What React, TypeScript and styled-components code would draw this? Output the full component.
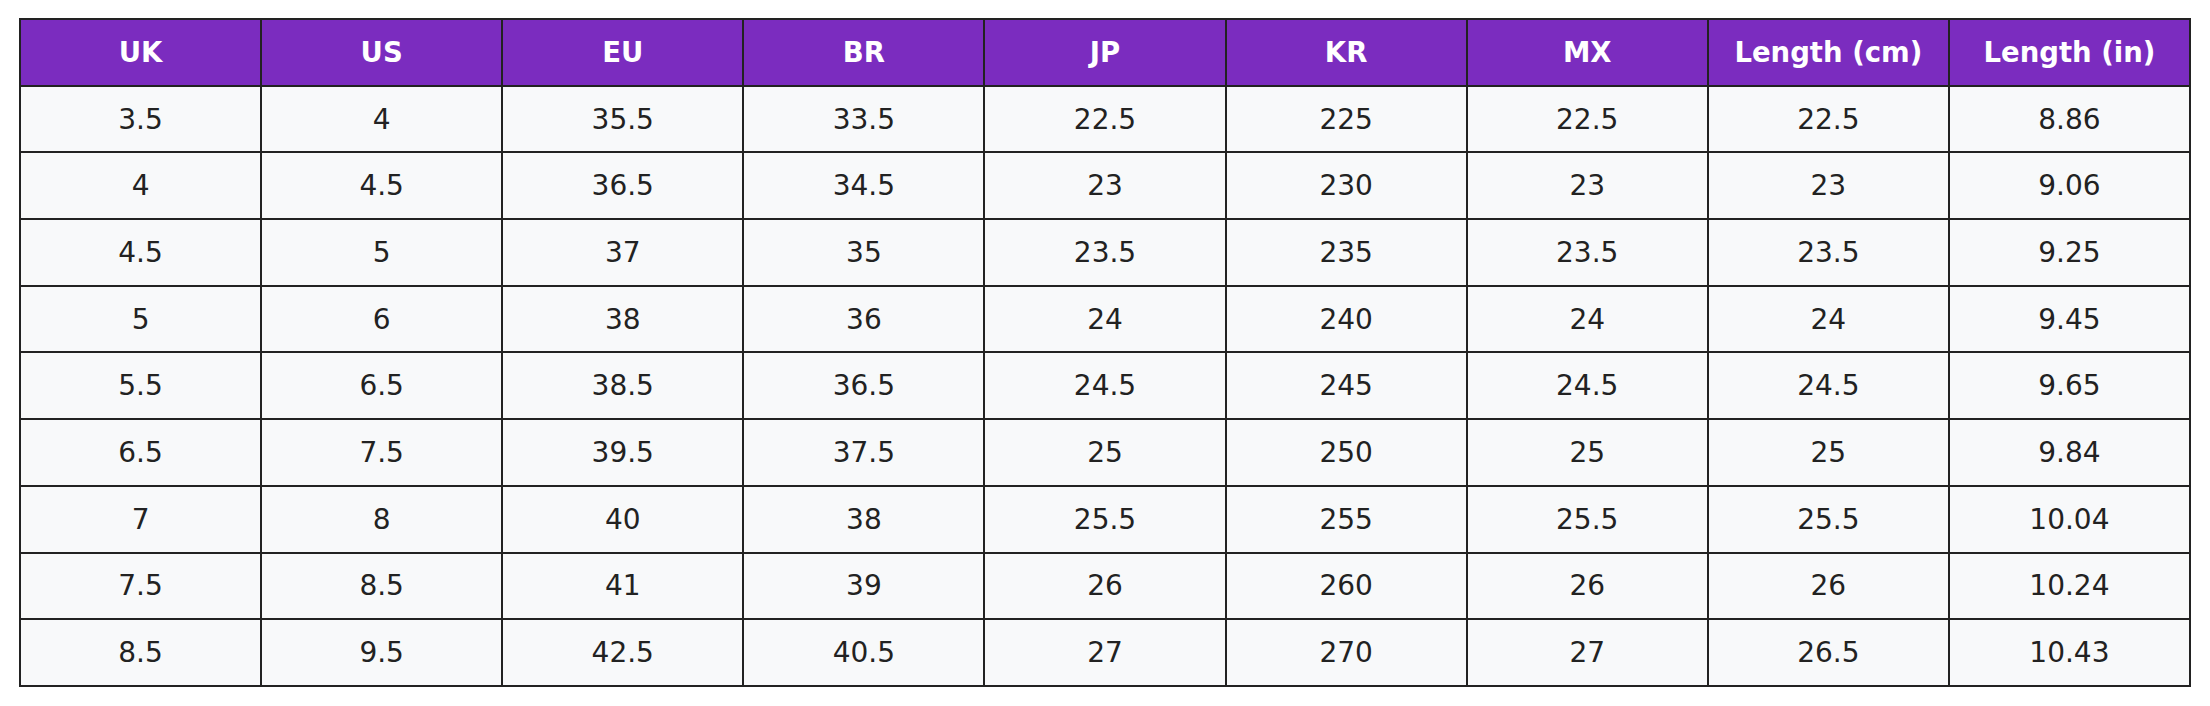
import React from "react";
import styled, { createGlobalStyle } from "styled-components";

const Global = createGlobalStyle`
  html, body { margin: 0; padding: 0; background: #ffffff; }
  body { font-family: "DejaVu Sans", "Liberation Sans", sans-serif; }
`;

const Page = styled.div`
  padding: 18px 19px;
`;

const Table = styled.table`
  width: 2172px;
  table-layout: fixed;
  border-collapse: separate;
  border-spacing: 0;
  border-left: 2px solid #222222;
  border-top: 2px solid #222222;
`;

const Th = styled.th`
  box-sizing: border-box;
  height: 66.7px;
  padding: 0;
  background: #7b2cbf;
  color: #ffffff;
  font-size: 27.5px;
  font-weight: 700;
  text-align: center;
  vertical-align: middle;
  border-right: 2px solid #222222;
  border-bottom: 2px solid #222222;
`;

const Td = styled.td`
  box-sizing: border-box;
  height: 66.7px;
  padding: 0;
  background: #f8f9fa;
  color: #222222;
  font-size: 28px;
  font-weight: 400;
  text-align: center;
  vertical-align: middle;
  border-right: 2px solid #222222;
  border-bottom: 2px solid #222222;
`;

const headers = ["UK", "US", "EU", "BR", "JP", "KR", "MX", "Length (cm)", "Length (in)"];

const rows: string[][] = [
  ["3.5", "4", "35.5", "33.5", "22.5", "225", "22.5", "22.5", "8.86"],
  ["4", "4.5", "36.5", "34.5", "23", "230", "23", "23", "9.06"],
  ["4.5", "5", "37", "35", "23.5", "235", "23.5", "23.5", "9.25"],
  ["5", "6", "38", "36", "24", "240", "24", "24", "9.45"],
  ["5.5", "6.5", "38.5", "36.5", "24.5", "245", "24.5", "24.5", "9.65"],
  ["6.5", "7.5", "39.5", "37.5", "25", "250", "25", "25", "9.84"],
  ["7", "8", "40", "38", "25.5", "255", "25.5", "25.5", "10.04"],
  ["7.5", "8.5", "41", "39", "26", "260", "26", "26", "10.24"],
  ["8.5", "9.5", "42.5", "40.5", "27", "270", "27", "26.5", "10.43"],
];

export default function App() {
  return (
    <>
      <Global />
      <Page>
        <Table>
          <thead>
            <tr>
              {headers.map((h) => (
                <Th key={h}>{h}</Th>
              ))}
            </tr>
          </thead>
          <tbody>
            {rows.map((r, i) => (
              <tr key={i}>
                {r.map((c, j) => (
                  <Td key={j}>{c}</Td>
                ))}
              </tr>
            ))}
          </tbody>
        </Table>
      </Page>
    </>
  );
}
